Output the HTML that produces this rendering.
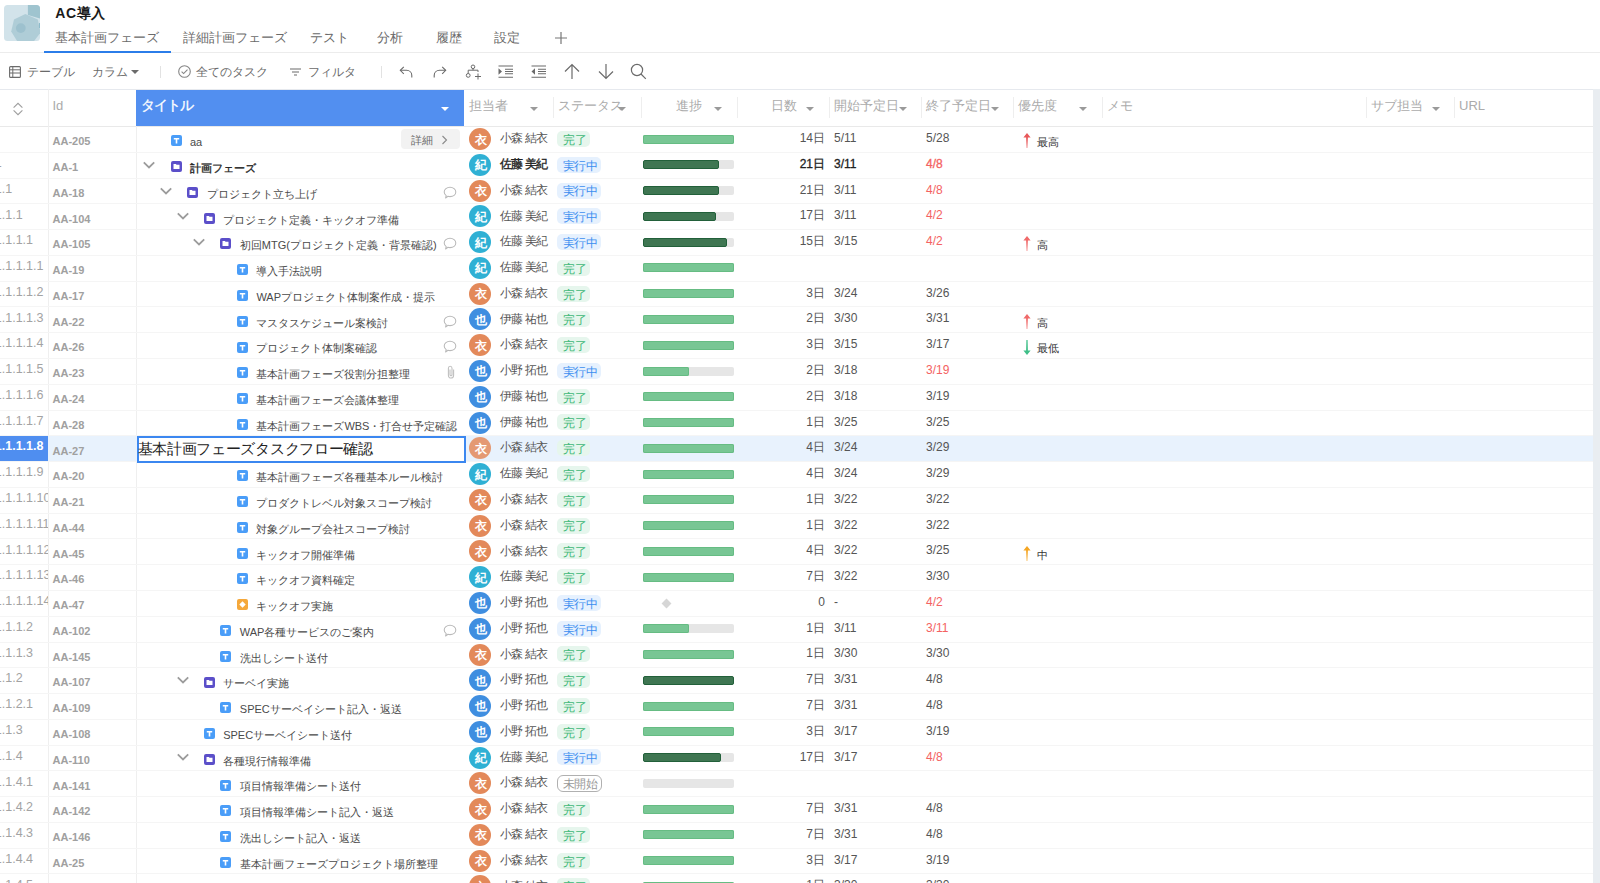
<!DOCTYPE html><html><head><meta charset="utf-8"><style>
*{box-sizing:border-box;margin:0;padding:0}
html,body{width:1600px;height:883px;overflow:hidden;background:#fff;font-family:"Liberation Sans",sans-serif}
.t{position:absolute;white-space:nowrap;line-height:20px}
.a{position:absolute}
svg{display:block}
</style></head><body>
<div class="a" style="left:4px;top:4.5px;width:36.2px;height:36.5px;border-radius:3.5px;overflow:hidden"><svg width="37" height="37" viewBox="0 0.5 37 37"><rect x="0" y="0" width="37" height="38" fill="#d2e3ea"/><path d="M23.9 0H37V14.4L23.9 10.6Z" fill="#9fc4cf"/><path d="M21.3 9.6L33.8 15L36.5 28L29 38H14L7.2 27L10 15Z" fill="#afcdd7"/><circle cx="16.8" cy="23.6" r="4.9" fill="#9dc1ce"/><rect x="35" y="18.5" width="2" height="5" fill="#8fbccb"/></svg></div>
<div class="t" style="left:55.30px;top:2.65px;font-size:14px;color:#1a1a1a;font-weight:bold;letter-spacing:0.5px">AC導入</div>
<div class="t" style="left:55.00px;top:28.00px;font-size:13px;color:#6a6a6a;font-weight:normal;">基本計画フェーズ</div>
<div class="t" style="left:183.00px;top:28.00px;font-size:13px;color:#6a6a6a;font-weight:normal;">詳細計画フェーズ</div>
<div class="t" style="left:310.00px;top:28.00px;font-size:13px;color:#6a6a6a;font-weight:normal;">テスト</div>
<div class="t" style="left:377.00px;top:28.00px;font-size:13px;color:#6a6a6a;font-weight:normal;">分析</div>
<div class="t" style="left:435.50px;top:28.00px;font-size:13px;color:#6a6a6a;font-weight:normal;">履歴</div>
<div class="t" style="left:494.00px;top:28.00px;font-size:13px;color:#6a6a6a;font-weight:normal;">設定</div>
<svg class="a" style="left:554px;top:31px" width="14" height="14" viewBox="0 0 14 14"><path d="M7 1V13M1 7H13" stroke="#777" stroke-width="1.2"/></svg>
<div class="a" style="left:0;top:52px;width:1600px;height:1px;background:#ececec"></div>
<div class="a" style="left:44px;top:50.5px;width:127px;height:2px;background:#2b7de9"></div>
<svg class="a" style="left:9px;top:66px" width="12" height="12" viewBox="0 0 12 12"><rect x="0.6" y="0.6" width="10.8" height="10.8" rx="1" fill="none" stroke="#6b6b6b" stroke-width="1.1"/><path d="M0.6 3.8H11.4M0.6 7H11.4M3.8 0.6V11.4" stroke="#6b6b6b" stroke-width="1"/></svg>
<div class="t" style="left:27.00px;top:62.34px;font-size:12px;color:#6a6a6a;font-weight:normal;">テーブル</div>
<div class="t" style="left:92.00px;top:62.34px;font-size:12px;color:#6a6a6a;font-weight:normal;">カラム</div>
<svg class="a" style="left:131px;top:70px" width="8" height="4" viewBox="0 0 8 4"><path d="M0 0H8L4 4Z" fill="#6b6b6b"/></svg>
<div class="a" style="left:160px;top:65.5px;width:1px;height:12px;background:#e2e2e2"></div>
<svg class="a" style="left:178px;top:65px" width="13" height="13" viewBox="0 0 13 13"><circle cx="6.5" cy="6.5" r="5.8" fill="none" stroke="#858585" stroke-width="1.1"/><path d="M3.6 6.7L5.6 8.6L9.5 4.6" fill="none" stroke="#858585" stroke-width="1.1"/></svg>
<div class="t" style="left:196.00px;top:62.34px;font-size:12px;color:#6a6a6a;font-weight:normal;">全てのタスク</div>
<svg class="a" style="left:290px;top:68px" width="11" height="8" viewBox="0 0 11 8"><path d="M0 1H11M2 4H9M4 7H7" stroke="#6b6b6b" stroke-width="1.1"/></svg>
<div class="t" style="left:308.00px;top:62.34px;font-size:12px;color:#6a6a6a;font-weight:normal;">フィルタ</div>
<div class="a" style="left:380.5px;top:65.5px;width:1px;height:12px;background:#e2e2e2"></div>
<svg class="a" style="left:399px;top:65.5px" width="15" height="14" viewBox="0 0 15 14"><path d="M1.5 4.3H7.5C10.5 4.3 12.8 6.5 12.8 9.5V11.5" fill="none" stroke="#6b6b6b" stroke-width="1.1"/><path d="M4.8 0.8L1.3 4.3L4.8 7.8" fill="none" stroke="#6b6b6b" stroke-width="1.1"/></svg>
<svg class="a" style="left:432px;top:65.5px" width="15" height="14" viewBox="0 0 15 14"><path d="M13.5 4.3H7.5C4.5 4.3 2.2 6.5 2.2 9.5V11.5" fill="none" stroke="#6b6b6b" stroke-width="1.1"/><path d="M10.2 0.8L13.7 4.3L10.2 7.8" fill="none" stroke="#6b6b6b" stroke-width="1.1"/></svg>
<svg class="a" style="left:464.5px;top:64px" width="18" height="17" viewBox="0 0 18 17"><circle cx="8" cy="2.8" r="1.8" fill="none" stroke="#6b6b6b" stroke-width="1"/><path d="M8 4.6V6.2M3.2 9.5V6.2H13V8" fill="none" stroke="#6b6b6b" stroke-width="1"/><circle cx="3.2" cy="11.4" r="1.9" fill="none" stroke="#6b6b6b" stroke-width="1"/><path d="M13 9.5V15.5M10 12.5H16" stroke="#6b6b6b" stroke-width="1"/></svg>
<svg class="a" style="left:497px;top:64px" width="17" height="15" viewBox="0 0 17 15"><path d="M1.5 2H16M8 5.3H16M8 7.5H16M8 9.7H16M1.5 13.3H16" stroke="#6b6b6b" stroke-width="1.1"/><path d="M1.5 4.3L5 7.5L1.5 10.7Z" fill="#6b6b6b"/></svg>
<svg class="a" style="left:530px;top:64px" width="17" height="15" viewBox="0 0 17 15"><path d="M1.5 2H16M8 5.3H16M8 7.5H16M8 9.7H16M1.5 13.3H16" stroke="#6b6b6b" stroke-width="1.1"/><path d="M5 4.3L1.5 7.5L5 10.7Z" fill="#6b6b6b"/></svg>
<svg class="a" style="left:564px;top:63px" width="16" height="17" viewBox="0 0 16 17"><path d="M8 1.5V16M1 8.5L8 1.5L15 8.5" fill="none" stroke="#6b6b6b" stroke-width="1.2"/></svg>
<svg class="a" style="left:597.5px;top:63px" width="16" height="17" viewBox="0 0 16 17"><path d="M8 1V15.5M1 8.5L8 15.5L15 8.5" fill="none" stroke="#6b6b6b" stroke-width="1.2"/></svg>
<svg class="a" style="left:630px;top:63px" width="17" height="17" viewBox="0 0 17 17"><circle cx="7" cy="7" r="5.6" fill="none" stroke="#6b6b6b" stroke-width="1.2"/><path d="M11 11L15.8 15.8" stroke="#6b6b6b" stroke-width="1.2"/></svg>
<div class="a" style="left:0;top:89px;width:1593px;height:1px;background:#e6e9ee"></div>
<div class="a" style="left:0;top:126px;width:1593px;height:1px;background:#e9e9e9"></div>
<div class="a" style="left:1593px;top:89px;width:7px;height:794px;background:#e9edf1"></div>
<div class="a" style="left:136px;top:90px;width:328px;height:36px;background:#528ff0"></div>
<svg class="a" style="left:12px;top:102px" width="12" height="14" viewBox="0 0 12 14"><path d="M1.6 5.6L6 1.3L10.4 5.6M1.6 8.4L6 12.7L10.4 8.4" fill="none" stroke="#9e9e9e" stroke-width="1.1"/></svg>
<div class="t" style="left:52.50px;top:96.00px;font-size:13px;color:#ababab;font-weight:normal;">Id</div>
<div class="t" style="left:140.50px;top:96.32px;font-size:13.5px;color:#ffffff;font-weight:normal;letter-spacing:-1px;-webkit-text-stroke:0.3px #fff">タイトル</div>
<svg class="a" style="left:441px;top:107px" width="8" height="4" viewBox="0 0 8 4"><path d="M0 0H8L4 4Z" fill="#ffffff"/></svg>
<div class="t" style="left:469.00px;top:96.00px;font-size:13px;color:#ababab;font-weight:normal;">担当者</div>
<svg class="a" style="left:530px;top:107px" width="8" height="4" viewBox="0 0 8 4"><path d="M0 0H8L4 4Z" fill="#9a9a9a"/></svg>
<div class="t" style="left:557.50px;top:96.00px;font-size:13px;color:#ababab;font-weight:normal;">ステータス</div>
<svg class="a" style="left:617.5px;top:107px" width="8" height="4" viewBox="0 0 8 4"><path d="M0 0H8L4 4Z" fill="#9a9a9a"/></svg>
<div class="t" style="left:676.00px;top:96.00px;font-size:13px;color:#ababab;font-weight:normal;">進捗</div>
<svg class="a" style="left:714px;top:107px" width="8" height="4" viewBox="0 0 8 4"><path d="M0 0H8L4 4Z" fill="#9a9a9a"/></svg>
<div class="t" style="left:771.00px;top:96.00px;font-size:13px;color:#ababab;font-weight:normal;">日数</div>
<svg class="a" style="left:806px;top:107px" width="8" height="4" viewBox="0 0 8 4"><path d="M0 0H8L4 4Z" fill="#9a9a9a"/></svg>
<div class="t" style="left:834.00px;top:96.00px;font-size:13px;color:#ababab;font-weight:normal;">開始予定日</div>
<svg class="a" style="left:898.5px;top:107px" width="8" height="4" viewBox="0 0 8 4"><path d="M0 0H8L4 4Z" fill="#9a9a9a"/></svg>
<div class="t" style="left:925.50px;top:96.00px;font-size:13px;color:#ababab;font-weight:normal;">終了予定日</div>
<svg class="a" style="left:990.5px;top:107px" width="8" height="4" viewBox="0 0 8 4"><path d="M0 0H8L4 4Z" fill="#9a9a9a"/></svg>
<div class="t" style="left:1018.00px;top:96.00px;font-size:13px;color:#ababab;font-weight:normal;">優先度</div>
<svg class="a" style="left:1079px;top:107px" width="8" height="4" viewBox="0 0 8 4"><path d="M0 0H8L4 4Z" fill="#9a9a9a"/></svg>
<div class="t" style="left:1107.00px;top:96.00px;font-size:13px;color:#ababab;font-weight:normal;">メモ</div>
<div class="t" style="left:1371.00px;top:96.00px;font-size:13px;color:#ababab;font-weight:normal;">サブ担当</div>
<svg class="a" style="left:1431.5px;top:107px" width="8" height="4" viewBox="0 0 8 4"><path d="M0 0H8L4 4Z" fill="#9a9a9a"/></svg>
<div class="t" style="left:1459.00px;top:96.00px;font-size:13px;color:#ababab;font-weight:normal;">URL</div>
<div class="a" style="left:553px;top:97px;width:1px;height:21px;background:#eeeeee"></div>
<div class="a" style="left:641px;top:97px;width:1px;height:21px;background:#eeeeee"></div>
<div class="a" style="left:737px;top:97px;width:1px;height:21px;background:#eeeeee"></div>
<div class="a" style="left:829px;top:97px;width:1px;height:21px;background:#eeeeee"></div>
<div class="a" style="left:921px;top:97px;width:1px;height:21px;background:#eeeeee"></div>
<div class="a" style="left:1013px;top:97px;width:1px;height:21px;background:#eeeeee"></div>
<div class="a" style="left:1102px;top:97px;width:1px;height:21px;background:#eeeeee"></div>
<div class="a" style="left:1366px;top:97px;width:1px;height:21px;background:#eeeeee"></div>
<div class="a" style="left:1454px;top:97px;width:1px;height:21px;background:#eeeeee"></div>
<div class="a" style="left:48px;top:89px;width:1px;height:794px;background:#efefef"></div>
<div class="a" style="left:136px;top:126px;width:1px;height:757px;background:#efefef"></div>
<div class="a" style="left:0;top:151.87px;width:1593px;height:1px;background:#f5f5f5"></div>
<div class="t" style="left:52.50px;top:131.29px;font-size:11px;color:#a0a0a0;font-weight:bold;">AA-205</div>
<div class="a" style="left:170.60px;top:135.40px;width:11px;height:11px"><svg width="11" height="11" viewBox="0 0 11 11"><rect x="0" y="0" width="11" height="11" rx="2" fill="#4a9df8"/><path d="M2.8 2.9H8.2V4.6H6.3V8.6H4.7V4.6H2.8Z" fill="#fff"/></svg></div>
<div class="t" style="left:190.00px;top:132.19px;font-size:11px;color:#4a4a4a;font-weight:normal;">aa</div>
<div class="a" style="left:400.5px;top:129.10px;width:59.5px;height:19.5px;border-radius:4px;background:#f2f2f2"></div>
<div class="t" style="left:411.00px;top:129.59px;font-size:11px;color:#6a6a6a;font-weight:normal;">詳細</div>
<svg class="a" style="left:441px;top:135.10px" width="7" height="10" viewBox="0 0 7 10"><path d="M1.5 1L5.5 5L1.5 9" fill="none" stroke="#8a8a8a" stroke-width="1.1"/></svg>
<div class="a" style="left:469px;top:128.10px;width:22px;height:22px;border-radius:50%;background:#e3895a;"></div>
<div class="t" style="left:474.50px;top:129.54px;font-size:12px;color:#ffffff;font-weight:bold;">衣</div>
<div class="t" style="left:500.00px;top:128.24px;font-size:12px;color:#555555;font-weight:normal;letter-spacing:-0.8px;">小森 結衣</div>
<div class="a" style="left:557px;top:131.00px;width:33px;height:16px;border-radius:5px;background:#e6f6ed"></div>
<div class="t" style="left:563.00px;top:129.94px;font-size:12px;color:#3fb877;font-weight:normal;letter-spacing:-0.4px">完了</div>
<div class="a" style="left:643px;top:134.60px;width:91px;height:9px;border-radius:2px;background:#e6e6e6"></div>
<div class="a" style="left:643px;top:134.60px;width:91.00px;height:9px;border-radius:2px;background:#78c694;box-shadow:inset 0 0 0 1px #66bc83"></div>
<div class="t" style="right:775.00px;top:128.04px;font-size:12px;color:#555555;font-weight:normal;">14日</div>
<div class="t" style="left:834.00px;top:128.04px;font-size:12px;color:#555555;font-weight:normal;">5/11</div>
<div class="t" style="left:926.00px;top:128.04px;font-size:12px;color:#555555;font-weight:normal;">5/28</div>
<svg class="a" style="left:1022.5px;top:133.40px" width="8" height="15" viewBox="0 0 8 15"><path d="M4 0L7.6 4.6H4.9L4.3 15H3.7L3.1 4.6H0.4Z" fill="#e8585a"/></svg>
<div class="t" style="left:1036.50px;top:132.29px;font-size:11px;color:#333333;font-weight:normal;">最高</div>
<div class="a" style="left:0;top:177.64px;width:1593px;height:1px;background:#f5f5f5"></div>
<div class="a" style="left:0;top:152.37px;width:48px;height:25.77px;overflow:hidden"><div class="t" style="left:-5.20px;top:0.67px;font-size:12.5px;color:#a3a3a3;font-weight:normal;">1</div></div>
<div class="t" style="left:52.50px;top:157.06px;font-size:11px;color:#a0a0a0;font-weight:bold;">AA-1</div>
<div class="a" style="left:143.40px;top:160.77px;width:12px;height:8px"><svg width="12" height="8" viewBox="0 0 12 8"><path d="M0.8 1.3L6 6.4L11.2 1.3" fill="none" stroke="#9c9c9c" stroke-width="1.8"/></svg></div>
<div class="a" style="left:170.60px;top:161.17px;width:11px;height:11px"><svg width="11" height="11" viewBox="0 0 11 11"><rect x="0" y="0" width="11" height="11" rx="2" fill="#5b4fc9"/><path d="M2.5 3H4.8L5.6 3.8H8.5V8H2.5Z" fill="#fff"/></svg></div>
<div class="t" style="left:190.00px;top:157.96px;font-size:11px;color:#1f1f1f;font-weight:normal;-webkit-text-stroke:0.35px #222">計画フェーズ</div>
<div class="a" style="left:469px;top:153.87px;width:22px;height:22px;border-radius:50%;background:#2fb0d4;"></div>
<div class="t" style="left:474.50px;top:155.31px;font-size:12px;color:#ffffff;font-weight:bold;">紀</div>
<div class="t" style="left:500.00px;top:154.01px;font-size:12px;color:#222;font-weight:normal;letter-spacing:-0.8px;-webkit-text-stroke:0.35px #222">佐藤 美紀</div>
<div class="a" style="left:557px;top:156.77px;width:44px;height:16px;border-radius:5px;background:#e6f1fe"></div>
<div class="t" style="left:563.00px;top:155.71px;font-size:12px;color:#3d8ef0;font-weight:normal;letter-spacing:-0.7px">実行中</div>
<div class="a" style="left:643px;top:160.37px;width:91px;height:9px;border-radius:2px;background:#e6e6e6"></div>
<div class="a" style="left:643px;top:160.37px;width:75.53px;height:9px;border-radius:2px;background:#3f7652;border:1px solid #22603a"></div>
<div class="t" style="right:775.00px;top:153.81px;font-size:12px;color:#222222;font-weight:normal;-webkit-text-stroke:0.3px currentColor;">21日</div>
<div class="t" style="left:834.00px;top:153.81px;font-size:12px;color:#222222;font-weight:normal;-webkit-text-stroke:0.3px currentColor;">3/11</div>
<div class="t" style="left:926.00px;top:153.81px;font-size:12px;color:#f46262;font-weight:normal;-webkit-text-stroke:0.3px currentColor;">4/8</div>
<div class="a" style="left:0;top:203.41px;width:1593px;height:1px;background:#f5f5f5"></div>
<div class="a" style="left:0;top:178.14px;width:48px;height:25.77px;overflow:hidden"><div class="t" style="left:-5.20px;top:0.67px;font-size:12.5px;color:#a3a3a3;font-weight:normal;">1.1</div></div>
<div class="t" style="left:52.50px;top:182.83px;font-size:11px;color:#a0a0a0;font-weight:bold;">AA-18</div>
<div class="a" style="left:160.00px;top:186.54px;width:12px;height:8px"><svg width="12" height="8" viewBox="0 0 12 8"><path d="M0.8 1.3L6 6.4L11.2 1.3" fill="none" stroke="#9c9c9c" stroke-width="1.8"/></svg></div>
<div class="a" style="left:187.20px;top:186.94px;width:11px;height:11px"><svg width="11" height="11" viewBox="0 0 11 11"><rect x="0" y="0" width="11" height="11" rx="2" fill="#5b4fc9"/><path d="M2.5 3H4.8L5.6 3.8H8.5V8H2.5Z" fill="#fff"/></svg></div>
<div class="t" style="left:206.60px;top:183.73px;font-size:11px;color:#4a4a4a;font-weight:normal;">プロジェクト立ち上げ</div>
<div class="a" style="left:443.2px;top:185.74px;width:14px;height:13px"><svg width="14" height="13" viewBox="0 0 14 13"><path d="M3.2 9.6C2 8.7 1.2 7.4 1.2 6C1.2 3.3 3.8 1.2 7 1.2C10.2 1.2 12.8 3.3 12.8 6C12.8 8.7 10.2 10.6 7 10.6C6.3 10.6 5.6 10.5 5 10.3L2.6 12Z" fill="none" stroke="#b9b9b9" stroke-width="1.05" stroke-linejoin="round"/></svg></div>
<div class="a" style="left:469px;top:179.64px;width:22px;height:22px;border-radius:50%;background:#e3895a;"></div>
<div class="t" style="left:474.50px;top:181.08px;font-size:12px;color:#ffffff;font-weight:bold;">衣</div>
<div class="t" style="left:500.00px;top:179.78px;font-size:12px;color:#555555;font-weight:normal;letter-spacing:-0.8px;">小森 結衣</div>
<div class="a" style="left:557px;top:182.54px;width:44px;height:16px;border-radius:5px;background:#e6f1fe"></div>
<div class="t" style="left:563.00px;top:181.48px;font-size:12px;color:#3d8ef0;font-weight:normal;letter-spacing:-0.7px">実行中</div>
<div class="a" style="left:643px;top:186.14px;width:91px;height:9px;border-radius:2px;background:#e6e6e6"></div>
<div class="a" style="left:643px;top:186.14px;width:75.53px;height:9px;border-radius:2px;background:#3f7652;border:1px solid #22603a"></div>
<div class="t" style="right:775.00px;top:179.58px;font-size:12px;color:#555555;font-weight:normal;">21日</div>
<div class="t" style="left:834.00px;top:179.58px;font-size:12px;color:#555555;font-weight:normal;">3/11</div>
<div class="t" style="left:926.00px;top:179.58px;font-size:12px;color:#f46262;font-weight:normal;">4/8</div>
<div class="a" style="left:0;top:229.18px;width:1593px;height:1px;background:#f5f5f5"></div>
<div class="a" style="left:0;top:203.91px;width:48px;height:25.77px;overflow:hidden"><div class="t" style="left:-5.20px;top:0.67px;font-size:12.5px;color:#a3a3a3;font-weight:normal;">1.1.1</div></div>
<div class="t" style="left:52.50px;top:208.60px;font-size:11px;color:#a0a0a0;font-weight:bold;">AA-104</div>
<div class="a" style="left:176.60px;top:212.31px;width:12px;height:8px"><svg width="12" height="8" viewBox="0 0 12 8"><path d="M0.8 1.3L6 6.4L11.2 1.3" fill="none" stroke="#9c9c9c" stroke-width="1.8"/></svg></div>
<div class="a" style="left:203.80px;top:212.71px;width:11px;height:11px"><svg width="11" height="11" viewBox="0 0 11 11"><rect x="0" y="0" width="11" height="11" rx="2" fill="#5b4fc9"/><path d="M2.5 3H4.8L5.6 3.8H8.5V8H2.5Z" fill="#fff"/></svg></div>
<div class="t" style="left:223.20px;top:209.50px;font-size:11px;color:#4a4a4a;font-weight:normal;">プロジェクト定義・キックオフ準備</div>
<div class="a" style="left:469px;top:205.41px;width:22px;height:22px;border-radius:50%;background:#2fb0d4;"></div>
<div class="t" style="left:474.50px;top:206.85px;font-size:12px;color:#ffffff;font-weight:bold;">紀</div>
<div class="t" style="left:500.00px;top:205.55px;font-size:12px;color:#555555;font-weight:normal;letter-spacing:-0.8px;">佐藤 美紀</div>
<div class="a" style="left:557px;top:208.31px;width:44px;height:16px;border-radius:5px;background:#e6f1fe"></div>
<div class="t" style="left:563.00px;top:207.25px;font-size:12px;color:#3d8ef0;font-weight:normal;letter-spacing:-0.7px">実行中</div>
<div class="a" style="left:643px;top:211.91px;width:91px;height:9px;border-radius:2px;background:#e6e6e6"></div>
<div class="a" style="left:643px;top:211.91px;width:72.80px;height:9px;border-radius:2px;background:#3f7652;border:1px solid #22603a"></div>
<div class="t" style="right:775.00px;top:205.35px;font-size:12px;color:#555555;font-weight:normal;">17日</div>
<div class="t" style="left:834.00px;top:205.35px;font-size:12px;color:#555555;font-weight:normal;">3/11</div>
<div class="t" style="left:926.00px;top:205.35px;font-size:12px;color:#f46262;font-weight:normal;">4/2</div>
<div class="a" style="left:0;top:254.95px;width:1593px;height:1px;background:#f5f5f5"></div>
<div class="a" style="left:0;top:229.68px;width:48px;height:25.77px;overflow:hidden"><div class="t" style="left:-5.20px;top:0.67px;font-size:12.5px;color:#a3a3a3;font-weight:normal;">1.1.1.1</div></div>
<div class="t" style="left:52.50px;top:234.37px;font-size:11px;color:#a0a0a0;font-weight:bold;">AA-105</div>
<div class="a" style="left:193.20px;top:238.08px;width:12px;height:8px"><svg width="12" height="8" viewBox="0 0 12 8"><path d="M0.8 1.3L6 6.4L11.2 1.3" fill="none" stroke="#9c9c9c" stroke-width="1.8"/></svg></div>
<div class="a" style="left:220.40px;top:238.48px;width:11px;height:11px"><svg width="11" height="11" viewBox="0 0 11 11"><rect x="0" y="0" width="11" height="11" rx="2" fill="#5b4fc9"/><path d="M2.5 3H4.8L5.6 3.8H8.5V8H2.5Z" fill="#fff"/></svg></div>
<div class="t" style="left:239.80px;top:235.27px;font-size:11px;color:#4a4a4a;font-weight:normal;">初回MTG(プロジェクト定義・背景確認)</div>
<div class="a" style="left:443.2px;top:237.28px;width:14px;height:13px"><svg width="14" height="13" viewBox="0 0 14 13"><path d="M3.2 9.6C2 8.7 1.2 7.4 1.2 6C1.2 3.3 3.8 1.2 7 1.2C10.2 1.2 12.8 3.3 12.8 6C12.8 8.7 10.2 10.6 7 10.6C6.3 10.6 5.6 10.5 5 10.3L2.6 12Z" fill="none" stroke="#b9b9b9" stroke-width="1.05" stroke-linejoin="round"/></svg></div>
<div class="a" style="left:469px;top:231.18px;width:22px;height:22px;border-radius:50%;background:#2fb0d4;"></div>
<div class="t" style="left:474.50px;top:232.62px;font-size:12px;color:#ffffff;font-weight:bold;">紀</div>
<div class="t" style="left:500.00px;top:231.32px;font-size:12px;color:#555555;font-weight:normal;letter-spacing:-0.8px;">佐藤 美紀</div>
<div class="a" style="left:557px;top:234.08px;width:44px;height:16px;border-radius:5px;background:#e6f1fe"></div>
<div class="t" style="left:563.00px;top:233.02px;font-size:12px;color:#3d8ef0;font-weight:normal;letter-spacing:-0.7px">実行中</div>
<div class="a" style="left:643px;top:237.68px;width:91px;height:9px;border-radius:2px;background:#e6e6e6"></div>
<div class="a" style="left:643px;top:237.68px;width:83.72px;height:9px;border-radius:2px;background:#3f7652;border:1px solid #22603a"></div>
<div class="t" style="right:775.00px;top:231.12px;font-size:12px;color:#555555;font-weight:normal;">15日</div>
<div class="t" style="left:834.00px;top:231.12px;font-size:12px;color:#555555;font-weight:normal;">3/15</div>
<div class="t" style="left:926.00px;top:231.12px;font-size:12px;color:#f46262;font-weight:normal;">4/2</div>
<svg class="a" style="left:1022.5px;top:236.48px" width="8" height="15" viewBox="0 0 8 15"><path d="M4 0L7.6 4.6H4.9L4.3 15H3.7L3.1 4.6H0.4Z" fill="#f06a6a"/></svg>
<div class="t" style="left:1036.50px;top:235.37px;font-size:11px;color:#333333;font-weight:normal;">高</div>
<div class="a" style="left:0;top:280.72px;width:1593px;height:1px;background:#f5f5f5"></div>
<div class="a" style="left:0;top:255.45px;width:48px;height:25.77px;overflow:hidden"><div class="t" style="left:-5.20px;top:0.67px;font-size:12.5px;color:#a3a3a3;font-weight:normal;">1.1.1.1.1</div></div>
<div class="t" style="left:52.50px;top:260.14px;font-size:11px;color:#a0a0a0;font-weight:bold;">AA-19</div>
<div class="a" style="left:237.00px;top:264.25px;width:11px;height:11px"><svg width="11" height="11" viewBox="0 0 11 11"><rect x="0" y="0" width="11" height="11" rx="2" fill="#4a9df8"/><path d="M2.8 2.9H8.2V4.6H6.3V8.6H4.7V4.6H2.8Z" fill="#fff"/></svg></div>
<div class="t" style="left:256.40px;top:261.04px;font-size:11px;color:#4a4a4a;font-weight:normal;">導入手法説明</div>
<div class="a" style="left:469px;top:256.95px;width:22px;height:22px;border-radius:50%;background:#2fb0d4;"></div>
<div class="t" style="left:474.50px;top:258.39px;font-size:12px;color:#ffffff;font-weight:bold;">紀</div>
<div class="t" style="left:500.00px;top:257.09px;font-size:12px;color:#555555;font-weight:normal;letter-spacing:-0.8px;">佐藤 美紀</div>
<div class="a" style="left:557px;top:259.85px;width:33px;height:16px;border-radius:5px;background:#e6f6ed"></div>
<div class="t" style="left:563.00px;top:258.79px;font-size:12px;color:#3fb877;font-weight:normal;letter-spacing:-0.4px">完了</div>
<div class="a" style="left:643px;top:263.45px;width:91px;height:9px;border-radius:2px;background:#e6e6e6"></div>
<div class="a" style="left:643px;top:263.45px;width:91.00px;height:9px;border-radius:2px;background:#78c694;box-shadow:inset 0 0 0 1px #66bc83"></div>
<div class="a" style="left:0;top:306.49px;width:1593px;height:1px;background:#f5f5f5"></div>
<div class="a" style="left:0;top:281.22px;width:48px;height:25.77px;overflow:hidden"><div class="t" style="left:-5.20px;top:0.67px;font-size:12.5px;color:#a3a3a3;font-weight:normal;">1.1.1.1.2</div></div>
<div class="t" style="left:52.50px;top:285.91px;font-size:11px;color:#a0a0a0;font-weight:bold;">AA-17</div>
<div class="a" style="left:237.00px;top:290.02px;width:11px;height:11px"><svg width="11" height="11" viewBox="0 0 11 11"><rect x="0" y="0" width="11" height="11" rx="2" fill="#4a9df8"/><path d="M2.8 2.9H8.2V4.6H6.3V8.6H4.7V4.6H2.8Z" fill="#fff"/></svg></div>
<div class="t" style="left:256.40px;top:286.81px;font-size:11px;color:#4a4a4a;font-weight:normal;">WAPプロジェクト体制案作成・提示</div>
<div class="a" style="left:469px;top:282.72px;width:22px;height:22px;border-radius:50%;background:#e3895a;"></div>
<div class="t" style="left:474.50px;top:284.16px;font-size:12px;color:#ffffff;font-weight:bold;">衣</div>
<div class="t" style="left:500.00px;top:282.86px;font-size:12px;color:#555555;font-weight:normal;letter-spacing:-0.8px;">小森 結衣</div>
<div class="a" style="left:557px;top:285.62px;width:33px;height:16px;border-radius:5px;background:#e6f6ed"></div>
<div class="t" style="left:563.00px;top:284.56px;font-size:12px;color:#3fb877;font-weight:normal;letter-spacing:-0.4px">完了</div>
<div class="a" style="left:643px;top:289.22px;width:91px;height:9px;border-radius:2px;background:#e6e6e6"></div>
<div class="a" style="left:643px;top:289.22px;width:91.00px;height:9px;border-radius:2px;background:#78c694;box-shadow:inset 0 0 0 1px #66bc83"></div>
<div class="t" style="right:775.00px;top:282.66px;font-size:12px;color:#555555;font-weight:normal;">3日</div>
<div class="t" style="left:834.00px;top:282.66px;font-size:12px;color:#555555;font-weight:normal;">3/24</div>
<div class="t" style="left:926.00px;top:282.66px;font-size:12px;color:#555555;font-weight:normal;">3/26</div>
<div class="a" style="left:0;top:332.26px;width:1593px;height:1px;background:#f5f5f5"></div>
<div class="a" style="left:0;top:306.99px;width:48px;height:25.77px;overflow:hidden"><div class="t" style="left:-5.20px;top:0.67px;font-size:12.5px;color:#a3a3a3;font-weight:normal;">1.1.1.1.3</div></div>
<div class="t" style="left:52.50px;top:311.68px;font-size:11px;color:#a0a0a0;font-weight:bold;">AA-22</div>
<div class="a" style="left:237.00px;top:315.79px;width:11px;height:11px"><svg width="11" height="11" viewBox="0 0 11 11"><rect x="0" y="0" width="11" height="11" rx="2" fill="#4a9df8"/><path d="M2.8 2.9H8.2V4.6H6.3V8.6H4.7V4.6H2.8Z" fill="#fff"/></svg></div>
<div class="t" style="left:256.40px;top:312.58px;font-size:11px;color:#4a4a4a;font-weight:normal;">マスタスケジュール案検討</div>
<div class="a" style="left:443.2px;top:314.59px;width:14px;height:13px"><svg width="14" height="13" viewBox="0 0 14 13"><path d="M3.2 9.6C2 8.7 1.2 7.4 1.2 6C1.2 3.3 3.8 1.2 7 1.2C10.2 1.2 12.8 3.3 12.8 6C12.8 8.7 10.2 10.6 7 10.6C6.3 10.6 5.6 10.5 5 10.3L2.6 12Z" fill="none" stroke="#b9b9b9" stroke-width="1.05" stroke-linejoin="round"/></svg></div>
<div class="a" style="left:469px;top:308.49px;width:22px;height:22px;border-radius:50%;background:#3f8ee0;"></div>
<div class="t" style="left:474.50px;top:309.93px;font-size:12px;color:#ffffff;font-weight:bold;">也</div>
<div class="t" style="left:500.00px;top:308.63px;font-size:12px;color:#555555;font-weight:normal;letter-spacing:-0.8px;">伊藤 祐也</div>
<div class="a" style="left:557px;top:311.39px;width:33px;height:16px;border-radius:5px;background:#e6f6ed"></div>
<div class="t" style="left:563.00px;top:310.33px;font-size:12px;color:#3fb877;font-weight:normal;letter-spacing:-0.4px">完了</div>
<div class="a" style="left:643px;top:314.99px;width:91px;height:9px;border-radius:2px;background:#e6e6e6"></div>
<div class="a" style="left:643px;top:314.99px;width:91.00px;height:9px;border-radius:2px;background:#78c694;box-shadow:inset 0 0 0 1px #66bc83"></div>
<div class="t" style="right:775.00px;top:308.43px;font-size:12px;color:#555555;font-weight:normal;">2日</div>
<div class="t" style="left:834.00px;top:308.43px;font-size:12px;color:#555555;font-weight:normal;">3/30</div>
<div class="t" style="left:926.00px;top:308.43px;font-size:12px;color:#555555;font-weight:normal;">3/31</div>
<svg class="a" style="left:1022.5px;top:313.79px" width="8" height="15" viewBox="0 0 8 15"><path d="M4 0L7.6 4.6H4.9L4.3 15H3.7L3.1 4.6H0.4Z" fill="#f06a6a"/></svg>
<div class="t" style="left:1036.50px;top:312.68px;font-size:11px;color:#333333;font-weight:normal;">高</div>
<div class="a" style="left:0;top:358.03px;width:1593px;height:1px;background:#f5f5f5"></div>
<div class="a" style="left:0;top:332.76px;width:48px;height:25.77px;overflow:hidden"><div class="t" style="left:-5.20px;top:0.67px;font-size:12.5px;color:#a3a3a3;font-weight:normal;">1.1.1.1.4</div></div>
<div class="t" style="left:52.50px;top:337.45px;font-size:11px;color:#a0a0a0;font-weight:bold;">AA-26</div>
<div class="a" style="left:237.00px;top:341.56px;width:11px;height:11px"><svg width="11" height="11" viewBox="0 0 11 11"><rect x="0" y="0" width="11" height="11" rx="2" fill="#4a9df8"/><path d="M2.8 2.9H8.2V4.6H6.3V8.6H4.7V4.6H2.8Z" fill="#fff"/></svg></div>
<div class="t" style="left:256.40px;top:338.35px;font-size:11px;color:#4a4a4a;font-weight:normal;">プロジェクト体制案確認</div>
<div class="a" style="left:443.2px;top:340.36px;width:14px;height:13px"><svg width="14" height="13" viewBox="0 0 14 13"><path d="M3.2 9.6C2 8.7 1.2 7.4 1.2 6C1.2 3.3 3.8 1.2 7 1.2C10.2 1.2 12.8 3.3 12.8 6C12.8 8.7 10.2 10.6 7 10.6C6.3 10.6 5.6 10.5 5 10.3L2.6 12Z" fill="none" stroke="#b9b9b9" stroke-width="1.05" stroke-linejoin="round"/></svg></div>
<div class="a" style="left:469px;top:334.26px;width:22px;height:22px;border-radius:50%;background:#e3895a;"></div>
<div class="t" style="left:474.50px;top:335.70px;font-size:12px;color:#ffffff;font-weight:bold;">衣</div>
<div class="t" style="left:500.00px;top:334.40px;font-size:12px;color:#555555;font-weight:normal;letter-spacing:-0.8px;">小森 結衣</div>
<div class="a" style="left:557px;top:337.16px;width:33px;height:16px;border-radius:5px;background:#e6f6ed"></div>
<div class="t" style="left:563.00px;top:336.10px;font-size:12px;color:#3fb877;font-weight:normal;letter-spacing:-0.4px">完了</div>
<div class="a" style="left:643px;top:340.76px;width:91px;height:9px;border-radius:2px;background:#e6e6e6"></div>
<div class="a" style="left:643px;top:340.76px;width:91.00px;height:9px;border-radius:2px;background:#78c694;box-shadow:inset 0 0 0 1px #66bc83"></div>
<div class="t" style="right:775.00px;top:334.20px;font-size:12px;color:#555555;font-weight:normal;">3日</div>
<div class="t" style="left:834.00px;top:334.20px;font-size:12px;color:#555555;font-weight:normal;">3/15</div>
<div class="t" style="left:926.00px;top:334.20px;font-size:12px;color:#555555;font-weight:normal;">3/17</div>
<svg class="a" style="left:1022.5px;top:339.96px" width="8" height="15" viewBox="0 0 8 15"><path d="M4 15L7.6 10.4H4.9L4.6 0H3.4L3.1 10.4H0.4Z" fill="#3fbf88"/></svg>
<div class="t" style="left:1036.50px;top:338.45px;font-size:11px;color:#333333;font-weight:normal;">最低</div>
<div class="a" style="left:0;top:383.80px;width:1593px;height:1px;background:#f5f5f5"></div>
<div class="a" style="left:0;top:358.53px;width:48px;height:25.77px;overflow:hidden"><div class="t" style="left:-5.20px;top:0.67px;font-size:12.5px;color:#a3a3a3;font-weight:normal;">1.1.1.1.5</div></div>
<div class="t" style="left:52.50px;top:363.22px;font-size:11px;color:#a0a0a0;font-weight:bold;">AA-23</div>
<div class="a" style="left:237.00px;top:367.33px;width:11px;height:11px"><svg width="11" height="11" viewBox="0 0 11 11"><rect x="0" y="0" width="11" height="11" rx="2" fill="#4a9df8"/><path d="M2.8 2.9H8.2V4.6H6.3V8.6H4.7V4.6H2.8Z" fill="#fff"/></svg></div>
<div class="t" style="left:256.40px;top:364.12px;font-size:11px;color:#4a4a4a;font-weight:normal;">基本計画フェーズ役割分担整理</div>
<div class="a" style="left:446.5px;top:364.53px;width:8px;height:14px"><svg width="8" height="14" viewBox="0 0 8 14"><path d="M6.6 4.5V10.2C6.6 12 5.5 13 4 13C2.5 13 1.4 12 1.4 10.2V3.2C1.4 2 2.2 1.2 3.2 1.2C4.3 1.2 5 2 5 3.2V9.8C5 10.4 4.6 10.8 4 10.8C3.4 10.8 3 10.4 3 9.8V4.5" fill="none" stroke="#c0c0c0" stroke-width="1.1"/></svg></div>
<div class="a" style="left:469px;top:360.03px;width:22px;height:22px;border-radius:50%;background:#3f8ee0;"></div>
<div class="t" style="left:474.50px;top:361.47px;font-size:12px;color:#ffffff;font-weight:bold;">也</div>
<div class="t" style="left:500.00px;top:360.17px;font-size:12px;color:#555555;font-weight:normal;letter-spacing:-0.8px;">小野 拓也</div>
<div class="a" style="left:557px;top:362.93px;width:44px;height:16px;border-radius:5px;background:#e6f1fe"></div>
<div class="t" style="left:563.00px;top:361.87px;font-size:12px;color:#3d8ef0;font-weight:normal;letter-spacing:-0.7px">実行中</div>
<div class="a" style="left:643px;top:366.53px;width:91px;height:9px;border-radius:2px;background:#e6e6e6"></div>
<div class="a" style="left:643px;top:366.53px;width:45.50px;height:9px;border-radius:2px;background:#78c694;box-shadow:inset 0 0 0 1px #66bc83"></div>
<div class="t" style="right:775.00px;top:359.97px;font-size:12px;color:#555555;font-weight:normal;">2日</div>
<div class="t" style="left:834.00px;top:359.97px;font-size:12px;color:#555555;font-weight:normal;">3/18</div>
<div class="t" style="left:926.00px;top:359.97px;font-size:12px;color:#f46262;font-weight:normal;">3/19</div>
<div class="a" style="left:0;top:409.57px;width:1593px;height:1px;background:#f5f5f5"></div>
<div class="a" style="left:0;top:384.30px;width:48px;height:25.77px;overflow:hidden"><div class="t" style="left:-5.20px;top:0.67px;font-size:12.5px;color:#a3a3a3;font-weight:normal;">1.1.1.1.6</div></div>
<div class="t" style="left:52.50px;top:388.99px;font-size:11px;color:#a0a0a0;font-weight:bold;">AA-24</div>
<div class="a" style="left:237.00px;top:393.10px;width:11px;height:11px"><svg width="11" height="11" viewBox="0 0 11 11"><rect x="0" y="0" width="11" height="11" rx="2" fill="#4a9df8"/><path d="M2.8 2.9H8.2V4.6H6.3V8.6H4.7V4.6H2.8Z" fill="#fff"/></svg></div>
<div class="t" style="left:256.40px;top:389.89px;font-size:11px;color:#4a4a4a;font-weight:normal;">基本計画フェーズ会議体整理</div>
<div class="a" style="left:469px;top:385.80px;width:22px;height:22px;border-radius:50%;background:#3f8ee0;"></div>
<div class="t" style="left:474.50px;top:387.24px;font-size:12px;color:#ffffff;font-weight:bold;">也</div>
<div class="t" style="left:500.00px;top:385.94px;font-size:12px;color:#555555;font-weight:normal;letter-spacing:-0.8px;">伊藤 祐也</div>
<div class="a" style="left:557px;top:388.70px;width:33px;height:16px;border-radius:5px;background:#e6f6ed"></div>
<div class="t" style="left:563.00px;top:387.64px;font-size:12px;color:#3fb877;font-weight:normal;letter-spacing:-0.4px">完了</div>
<div class="a" style="left:643px;top:392.30px;width:91px;height:9px;border-radius:2px;background:#e6e6e6"></div>
<div class="a" style="left:643px;top:392.30px;width:91.00px;height:9px;border-radius:2px;background:#78c694;box-shadow:inset 0 0 0 1px #66bc83"></div>
<div class="t" style="right:775.00px;top:385.74px;font-size:12px;color:#555555;font-weight:normal;">2日</div>
<div class="t" style="left:834.00px;top:385.74px;font-size:12px;color:#555555;font-weight:normal;">3/18</div>
<div class="t" style="left:926.00px;top:385.74px;font-size:12px;color:#555555;font-weight:normal;">3/19</div>
<div class="a" style="left:0;top:435.34px;width:1593px;height:1px;background:#f5f5f5"></div>
<div class="a" style="left:0;top:410.07px;width:48px;height:25.77px;overflow:hidden"><div class="t" style="left:-5.20px;top:0.67px;font-size:12.5px;color:#a3a3a3;font-weight:normal;">1.1.1.1.7</div></div>
<div class="t" style="left:52.50px;top:414.76px;font-size:11px;color:#a0a0a0;font-weight:bold;">AA-28</div>
<div class="a" style="left:237.00px;top:418.87px;width:11px;height:11px"><svg width="11" height="11" viewBox="0 0 11 11"><rect x="0" y="0" width="11" height="11" rx="2" fill="#4a9df8"/><path d="M2.8 2.9H8.2V4.6H6.3V8.6H4.7V4.6H2.8Z" fill="#fff"/></svg></div>
<div class="t" style="left:256.40px;top:415.66px;font-size:11px;color:#4a4a4a;font-weight:normal;">基本計画フェーズWBS・打合せ予定確認</div>
<div class="a" style="left:469px;top:411.57px;width:22px;height:22px;border-radius:50%;background:#3f8ee0;"></div>
<div class="t" style="left:474.50px;top:413.01px;font-size:12px;color:#ffffff;font-weight:bold;">也</div>
<div class="t" style="left:500.00px;top:411.71px;font-size:12px;color:#555555;font-weight:normal;letter-spacing:-0.8px;">伊藤 祐也</div>
<div class="a" style="left:557px;top:414.47px;width:33px;height:16px;border-radius:5px;background:#e6f6ed"></div>
<div class="t" style="left:563.00px;top:413.41px;font-size:12px;color:#3fb877;font-weight:normal;letter-spacing:-0.4px">完了</div>
<div class="a" style="left:643px;top:418.07px;width:91px;height:9px;border-radius:2px;background:#e6e6e6"></div>
<div class="a" style="left:643px;top:418.07px;width:91.00px;height:9px;border-radius:2px;background:#78c694;box-shadow:inset 0 0 0 1px #66bc83"></div>
<div class="t" style="right:775.00px;top:411.51px;font-size:12px;color:#555555;font-weight:normal;">1日</div>
<div class="t" style="left:834.00px;top:411.51px;font-size:12px;color:#555555;font-weight:normal;">3/25</div>
<div class="t" style="left:926.00px;top:411.51px;font-size:12px;color:#555555;font-weight:normal;">3/25</div>
<div class="a" style="left:0;top:436.34px;width:1593px;height:25.27px;background:#e8f2fd"></div>
<div class="a" style="left:0;top:436.34px;width:48px;height:25.27px;background:#4f8ef0"></div>
<div class="a" style="left:0;top:461.11px;width:1593px;height:1px;background:#f5f5f5"></div>
<div class="a" style="left:0;top:435.84px;width:48px;height:25.77px;overflow:hidden"><div class="t" style="left:-5.20px;top:0.67px;font-size:12.5px;color:#ffffff;font-weight:bold;">1.1.1.1.8</div></div>
<div class="t" style="left:52.50px;top:440.53px;font-size:11px;color:#a0a0a0;font-weight:bold;">AA-27</div>
<div class="a" style="left:136.6px;top:435.84px;width:329.4px;height:27.27px;border:2px solid #3b87f0;background:#fff"></div>
<div class="t" style="left:137.60px;top:439.12px;font-size:14.5px;color:#222;font-weight:normal;letter-spacing:-0.3px">基本計画フェーズタスクフロー確認</div>
<div class="a" style="left:469px;top:437.34px;width:22px;height:22px;border-radius:50%;background:#e3895a;opacity:.85;"></div>
<div class="t" style="left:474.50px;top:438.78px;font-size:12px;color:#ffffff;font-weight:bold;">衣</div>
<div class="t" style="left:500.00px;top:437.48px;font-size:12px;color:#555555;font-weight:normal;letter-spacing:-0.8px;">小森 結衣</div>
<div class="a" style="left:557px;top:440.24px;width:33px;height:16px;border-radius:5px;background:#e6f6ed"></div>
<div class="t" style="left:563.00px;top:439.18px;font-size:12px;color:#3fb877;font-weight:normal;letter-spacing:-0.4px">完了</div>
<div class="a" style="left:643px;top:443.84px;width:91px;height:9px;border-radius:2px;background:#e6e6e6"></div>
<div class="a" style="left:643px;top:443.84px;width:91.00px;height:9px;border-radius:2px;background:#78c694;box-shadow:inset 0 0 0 1px #66bc83"></div>
<div class="t" style="right:775.00px;top:437.28px;font-size:12px;color:#555555;font-weight:normal;">4日</div>
<div class="t" style="left:834.00px;top:437.28px;font-size:12px;color:#555555;font-weight:normal;">3/24</div>
<div class="t" style="left:926.00px;top:437.28px;font-size:12px;color:#555555;font-weight:normal;">3/29</div>
<div class="a" style="left:0;top:486.88px;width:1593px;height:1px;background:#f5f5f5"></div>
<div class="a" style="left:0;top:461.61px;width:48px;height:25.77px;overflow:hidden"><div class="t" style="left:-5.20px;top:0.67px;font-size:12.5px;color:#a3a3a3;font-weight:normal;">1.1.1.1.9</div></div>
<div class="t" style="left:52.50px;top:466.30px;font-size:11px;color:#a0a0a0;font-weight:bold;">AA-20</div>
<div class="a" style="left:237.00px;top:470.41px;width:11px;height:11px"><svg width="11" height="11" viewBox="0 0 11 11"><rect x="0" y="0" width="11" height="11" rx="2" fill="#4a9df8"/><path d="M2.8 2.9H8.2V4.6H6.3V8.6H4.7V4.6H2.8Z" fill="#fff"/></svg></div>
<div class="t" style="left:256.40px;top:467.20px;font-size:11px;color:#4a4a4a;font-weight:normal;">基本計画フェーズ各種基本ルール検討</div>
<div class="a" style="left:469px;top:463.11px;width:22px;height:22px;border-radius:50%;background:#2fb0d4;"></div>
<div class="t" style="left:474.50px;top:464.55px;font-size:12px;color:#ffffff;font-weight:bold;">紀</div>
<div class="t" style="left:500.00px;top:463.25px;font-size:12px;color:#555555;font-weight:normal;letter-spacing:-0.8px;">佐藤 美紀</div>
<div class="a" style="left:557px;top:466.01px;width:33px;height:16px;border-radius:5px;background:#e6f6ed"></div>
<div class="t" style="left:563.00px;top:464.95px;font-size:12px;color:#3fb877;font-weight:normal;letter-spacing:-0.4px">完了</div>
<div class="a" style="left:643px;top:469.61px;width:91px;height:9px;border-radius:2px;background:#e6e6e6"></div>
<div class="a" style="left:643px;top:469.61px;width:91.00px;height:9px;border-radius:2px;background:#78c694;box-shadow:inset 0 0 0 1px #66bc83"></div>
<div class="t" style="right:775.00px;top:463.05px;font-size:12px;color:#555555;font-weight:normal;">4日</div>
<div class="t" style="left:834.00px;top:463.05px;font-size:12px;color:#555555;font-weight:normal;">3/24</div>
<div class="t" style="left:926.00px;top:463.05px;font-size:12px;color:#555555;font-weight:normal;">3/29</div>
<div class="a" style="left:0;top:512.65px;width:1593px;height:1px;background:#f5f5f5"></div>
<div class="a" style="left:0;top:487.38px;width:48px;height:25.77px;overflow:hidden"><div class="t" style="left:-5.20px;top:0.67px;font-size:12.5px;color:#a3a3a3;font-weight:normal;">1.1.1.1.10</div></div>
<div class="t" style="left:52.50px;top:492.07px;font-size:11px;color:#a0a0a0;font-weight:bold;">AA-21</div>
<div class="a" style="left:237.00px;top:496.18px;width:11px;height:11px"><svg width="11" height="11" viewBox="0 0 11 11"><rect x="0" y="0" width="11" height="11" rx="2" fill="#4a9df8"/><path d="M2.8 2.9H8.2V4.6H6.3V8.6H4.7V4.6H2.8Z" fill="#fff"/></svg></div>
<div class="t" style="left:256.40px;top:492.97px;font-size:11px;color:#4a4a4a;font-weight:normal;">プロダクトレベル対象スコープ検討</div>
<div class="a" style="left:469px;top:488.88px;width:22px;height:22px;border-radius:50%;background:#e3895a;"></div>
<div class="t" style="left:474.50px;top:490.32px;font-size:12px;color:#ffffff;font-weight:bold;">衣</div>
<div class="t" style="left:500.00px;top:489.02px;font-size:12px;color:#555555;font-weight:normal;letter-spacing:-0.8px;">小森 結衣</div>
<div class="a" style="left:557px;top:491.78px;width:33px;height:16px;border-radius:5px;background:#e6f6ed"></div>
<div class="t" style="left:563.00px;top:490.72px;font-size:12px;color:#3fb877;font-weight:normal;letter-spacing:-0.4px">完了</div>
<div class="a" style="left:643px;top:495.38px;width:91px;height:9px;border-radius:2px;background:#e6e6e6"></div>
<div class="a" style="left:643px;top:495.38px;width:91.00px;height:9px;border-radius:2px;background:#78c694;box-shadow:inset 0 0 0 1px #66bc83"></div>
<div class="t" style="right:775.00px;top:488.82px;font-size:12px;color:#555555;font-weight:normal;">1日</div>
<div class="t" style="left:834.00px;top:488.82px;font-size:12px;color:#555555;font-weight:normal;">3/22</div>
<div class="t" style="left:926.00px;top:488.82px;font-size:12px;color:#555555;font-weight:normal;">3/22</div>
<div class="a" style="left:0;top:538.42px;width:1593px;height:1px;background:#f5f5f5"></div>
<div class="a" style="left:0;top:513.15px;width:48px;height:25.77px;overflow:hidden"><div class="t" style="left:-5.20px;top:0.67px;font-size:12.5px;color:#a3a3a3;font-weight:normal;">1.1.1.1.11</div></div>
<div class="t" style="left:52.50px;top:517.84px;font-size:11px;color:#a0a0a0;font-weight:bold;">AA-44</div>
<div class="a" style="left:237.00px;top:521.95px;width:11px;height:11px"><svg width="11" height="11" viewBox="0 0 11 11"><rect x="0" y="0" width="11" height="11" rx="2" fill="#4a9df8"/><path d="M2.8 2.9H8.2V4.6H6.3V8.6H4.7V4.6H2.8Z" fill="#fff"/></svg></div>
<div class="t" style="left:256.40px;top:518.74px;font-size:11px;color:#4a4a4a;font-weight:normal;">対象グループ会社スコープ検討</div>
<div class="a" style="left:469px;top:514.65px;width:22px;height:22px;border-radius:50%;background:#e3895a;"></div>
<div class="t" style="left:474.50px;top:516.09px;font-size:12px;color:#ffffff;font-weight:bold;">衣</div>
<div class="t" style="left:500.00px;top:514.79px;font-size:12px;color:#555555;font-weight:normal;letter-spacing:-0.8px;">小森 結衣</div>
<div class="a" style="left:557px;top:517.55px;width:33px;height:16px;border-radius:5px;background:#e6f6ed"></div>
<div class="t" style="left:563.00px;top:516.49px;font-size:12px;color:#3fb877;font-weight:normal;letter-spacing:-0.4px">完了</div>
<div class="a" style="left:643px;top:521.15px;width:91px;height:9px;border-radius:2px;background:#e6e6e6"></div>
<div class="a" style="left:643px;top:521.15px;width:91.00px;height:9px;border-radius:2px;background:#78c694;box-shadow:inset 0 0 0 1px #66bc83"></div>
<div class="t" style="right:775.00px;top:514.59px;font-size:12px;color:#555555;font-weight:normal;">1日</div>
<div class="t" style="left:834.00px;top:514.59px;font-size:12px;color:#555555;font-weight:normal;">3/22</div>
<div class="t" style="left:926.00px;top:514.59px;font-size:12px;color:#555555;font-weight:normal;">3/22</div>
<div class="a" style="left:0;top:564.19px;width:1593px;height:1px;background:#f5f5f5"></div>
<div class="a" style="left:0;top:538.92px;width:48px;height:25.77px;overflow:hidden"><div class="t" style="left:-5.20px;top:0.67px;font-size:12.5px;color:#a3a3a3;font-weight:normal;">1.1.1.1.12</div></div>
<div class="t" style="left:52.50px;top:543.61px;font-size:11px;color:#a0a0a0;font-weight:bold;">AA-45</div>
<div class="a" style="left:237.00px;top:547.72px;width:11px;height:11px"><svg width="11" height="11" viewBox="0 0 11 11"><rect x="0" y="0" width="11" height="11" rx="2" fill="#4a9df8"/><path d="M2.8 2.9H8.2V4.6H6.3V8.6H4.7V4.6H2.8Z" fill="#fff"/></svg></div>
<div class="t" style="left:256.40px;top:544.51px;font-size:11px;color:#4a4a4a;font-weight:normal;">キックオフ開催準備</div>
<div class="a" style="left:469px;top:540.42px;width:22px;height:22px;border-radius:50%;background:#e3895a;"></div>
<div class="t" style="left:474.50px;top:541.86px;font-size:12px;color:#ffffff;font-weight:bold;">衣</div>
<div class="t" style="left:500.00px;top:540.56px;font-size:12px;color:#555555;font-weight:normal;letter-spacing:-0.8px;">小森 結衣</div>
<div class="a" style="left:557px;top:543.32px;width:33px;height:16px;border-radius:5px;background:#e6f6ed"></div>
<div class="t" style="left:563.00px;top:542.26px;font-size:12px;color:#3fb877;font-weight:normal;letter-spacing:-0.4px">完了</div>
<div class="a" style="left:643px;top:546.92px;width:91px;height:9px;border-radius:2px;background:#e6e6e6"></div>
<div class="a" style="left:643px;top:546.92px;width:91.00px;height:9px;border-radius:2px;background:#78c694;box-shadow:inset 0 0 0 1px #66bc83"></div>
<div class="t" style="right:775.00px;top:540.36px;font-size:12px;color:#555555;font-weight:normal;">4日</div>
<div class="t" style="left:834.00px;top:540.36px;font-size:12px;color:#555555;font-weight:normal;">3/22</div>
<div class="t" style="left:926.00px;top:540.36px;font-size:12px;color:#555555;font-weight:normal;">3/25</div>
<svg class="a" style="left:1022.5px;top:545.72px" width="8" height="15" viewBox="0 0 8 15"><path d="M4 0L7.6 4.6H4.9L4.3 15H3.7L3.1 4.6H0.4Z" fill="#f5a623"/></svg>
<div class="t" style="left:1036.50px;top:544.61px;font-size:11px;color:#333333;font-weight:normal;">中</div>
<div class="a" style="left:0;top:589.96px;width:1593px;height:1px;background:#f5f5f5"></div>
<div class="a" style="left:0;top:564.69px;width:48px;height:25.77px;overflow:hidden"><div class="t" style="left:-5.20px;top:0.67px;font-size:12.5px;color:#a3a3a3;font-weight:normal;">1.1.1.1.13</div></div>
<div class="t" style="left:52.50px;top:569.38px;font-size:11px;color:#a0a0a0;font-weight:bold;">AA-46</div>
<div class="a" style="left:237.00px;top:573.49px;width:11px;height:11px"><svg width="11" height="11" viewBox="0 0 11 11"><rect x="0" y="0" width="11" height="11" rx="2" fill="#4a9df8"/><path d="M2.8 2.9H8.2V4.6H6.3V8.6H4.7V4.6H2.8Z" fill="#fff"/></svg></div>
<div class="t" style="left:256.40px;top:570.28px;font-size:11px;color:#4a4a4a;font-weight:normal;">キックオフ資料確定</div>
<div class="a" style="left:469px;top:566.19px;width:22px;height:22px;border-radius:50%;background:#2fb0d4;"></div>
<div class="t" style="left:474.50px;top:567.63px;font-size:12px;color:#ffffff;font-weight:bold;">紀</div>
<div class="t" style="left:500.00px;top:566.33px;font-size:12px;color:#555555;font-weight:normal;letter-spacing:-0.8px;">佐藤 美紀</div>
<div class="a" style="left:557px;top:569.09px;width:33px;height:16px;border-radius:5px;background:#e6f6ed"></div>
<div class="t" style="left:563.00px;top:568.03px;font-size:12px;color:#3fb877;font-weight:normal;letter-spacing:-0.4px">完了</div>
<div class="a" style="left:643px;top:572.69px;width:91px;height:9px;border-radius:2px;background:#e6e6e6"></div>
<div class="a" style="left:643px;top:572.69px;width:91.00px;height:9px;border-radius:2px;background:#78c694;box-shadow:inset 0 0 0 1px #66bc83"></div>
<div class="t" style="right:775.00px;top:566.13px;font-size:12px;color:#555555;font-weight:normal;">7日</div>
<div class="t" style="left:834.00px;top:566.13px;font-size:12px;color:#555555;font-weight:normal;">3/22</div>
<div class="t" style="left:926.00px;top:566.13px;font-size:12px;color:#555555;font-weight:normal;">3/30</div>
<div class="a" style="left:0;top:615.73px;width:1593px;height:1px;background:#f5f5f5"></div>
<div class="a" style="left:0;top:590.46px;width:48px;height:25.77px;overflow:hidden"><div class="t" style="left:-5.20px;top:0.67px;font-size:12.5px;color:#a3a3a3;font-weight:normal;">1.1.1.1.14</div></div>
<div class="t" style="left:52.50px;top:595.15px;font-size:11px;color:#a0a0a0;font-weight:bold;">AA-47</div>
<div class="a" style="left:237.00px;top:599.26px;width:11px;height:11px"><svg width="11" height="11" viewBox="0 0 11 11"><rect x="0" y="0" width="11" height="11" rx="2" fill="#f5a83a"/><path d="M5.5 2.3L8.7 5.5L5.5 8.7L2.3 5.5Z" fill="#fff"/></svg></div>
<div class="t" style="left:256.40px;top:596.05px;font-size:11px;color:#4a4a4a;font-weight:normal;">キックオフ実施</div>
<div class="a" style="left:469px;top:591.96px;width:22px;height:22px;border-radius:50%;background:#3f8ee0;"></div>
<div class="t" style="left:474.50px;top:593.40px;font-size:12px;color:#ffffff;font-weight:bold;">也</div>
<div class="t" style="left:500.00px;top:592.10px;font-size:12px;color:#555555;font-weight:normal;letter-spacing:-0.8px;">小野 拓也</div>
<div class="a" style="left:557px;top:594.86px;width:44px;height:16px;border-radius:5px;background:#e6f1fe"></div>
<div class="t" style="left:563.00px;top:593.80px;font-size:12px;color:#3d8ef0;font-weight:normal;letter-spacing:-0.7px">実行中</div>
<div class="a" style="left:663.3px;top:600.46px;width:7px;height:7px;background:#d6d6d6;transform:rotate(45deg)"></div>
<div class="t" style="right:775.00px;top:591.90px;font-size:12px;color:#555555;font-weight:normal;">0</div>
<div class="t" style="left:834.00px;top:591.90px;font-size:12px;color:#555555;font-weight:normal;">-</div>
<div class="t" style="left:926.00px;top:591.90px;font-size:12px;color:#f46262;font-weight:normal;">4/2</div>
<div class="a" style="left:0;top:641.50px;width:1593px;height:1px;background:#f5f5f5"></div>
<div class="a" style="left:0;top:616.23px;width:48px;height:25.77px;overflow:hidden"><div class="t" style="left:-5.20px;top:0.67px;font-size:12.5px;color:#a3a3a3;font-weight:normal;">1.1.1.2</div></div>
<div class="t" style="left:52.50px;top:620.92px;font-size:11px;color:#a0a0a0;font-weight:bold;">AA-102</div>
<div class="a" style="left:220.40px;top:625.03px;width:11px;height:11px"><svg width="11" height="11" viewBox="0 0 11 11"><rect x="0" y="0" width="11" height="11" rx="2" fill="#4a9df8"/><path d="M2.8 2.9H8.2V4.6H6.3V8.6H4.7V4.6H2.8Z" fill="#fff"/></svg></div>
<div class="t" style="left:239.80px;top:621.82px;font-size:11px;color:#4a4a4a;font-weight:normal;">WAP各種サービスのご案内</div>
<div class="a" style="left:443.2px;top:623.83px;width:14px;height:13px"><svg width="14" height="13" viewBox="0 0 14 13"><path d="M3.2 9.6C2 8.7 1.2 7.4 1.2 6C1.2 3.3 3.8 1.2 7 1.2C10.2 1.2 12.8 3.3 12.8 6C12.8 8.7 10.2 10.6 7 10.6C6.3 10.6 5.6 10.5 5 10.3L2.6 12Z" fill="none" stroke="#b9b9b9" stroke-width="1.05" stroke-linejoin="round"/></svg></div>
<div class="a" style="left:469px;top:617.73px;width:22px;height:22px;border-radius:50%;background:#3f8ee0;"></div>
<div class="t" style="left:474.50px;top:619.17px;font-size:12px;color:#ffffff;font-weight:bold;">也</div>
<div class="t" style="left:500.00px;top:617.87px;font-size:12px;color:#555555;font-weight:normal;letter-spacing:-0.8px;">小野 拓也</div>
<div class="a" style="left:557px;top:620.63px;width:44px;height:16px;border-radius:5px;background:#e6f1fe"></div>
<div class="t" style="left:563.00px;top:619.57px;font-size:12px;color:#3d8ef0;font-weight:normal;letter-spacing:-0.7px">実行中</div>
<div class="a" style="left:643px;top:624.23px;width:91px;height:9px;border-radius:2px;background:#e6e6e6"></div>
<div class="a" style="left:643px;top:624.23px;width:45.50px;height:9px;border-radius:2px;background:#78c694;box-shadow:inset 0 0 0 1px #66bc83"></div>
<div class="t" style="right:775.00px;top:617.67px;font-size:12px;color:#555555;font-weight:normal;">1日</div>
<div class="t" style="left:834.00px;top:617.67px;font-size:12px;color:#555555;font-weight:normal;">3/11</div>
<div class="t" style="left:926.00px;top:617.67px;font-size:12px;color:#f46262;font-weight:normal;">3/11</div>
<div class="a" style="left:0;top:667.27px;width:1593px;height:1px;background:#f5f5f5"></div>
<div class="a" style="left:0;top:642.00px;width:48px;height:25.77px;overflow:hidden"><div class="t" style="left:-5.20px;top:0.67px;font-size:12.5px;color:#a3a3a3;font-weight:normal;">1.1.1.3</div></div>
<div class="t" style="left:52.50px;top:646.69px;font-size:11px;color:#a0a0a0;font-weight:bold;">AA-145</div>
<div class="a" style="left:220.40px;top:650.80px;width:11px;height:11px"><svg width="11" height="11" viewBox="0 0 11 11"><rect x="0" y="0" width="11" height="11" rx="2" fill="#4a9df8"/><path d="M2.8 2.9H8.2V4.6H6.3V8.6H4.7V4.6H2.8Z" fill="#fff"/></svg></div>
<div class="t" style="left:239.80px;top:647.59px;font-size:11px;color:#4a4a4a;font-weight:normal;">洗出しシート送付</div>
<div class="a" style="left:469px;top:643.50px;width:22px;height:22px;border-radius:50%;background:#e3895a;"></div>
<div class="t" style="left:474.50px;top:644.94px;font-size:12px;color:#ffffff;font-weight:bold;">衣</div>
<div class="t" style="left:500.00px;top:643.64px;font-size:12px;color:#555555;font-weight:normal;letter-spacing:-0.8px;">小森 結衣</div>
<div class="a" style="left:557px;top:646.40px;width:33px;height:16px;border-radius:5px;background:#e6f6ed"></div>
<div class="t" style="left:563.00px;top:645.34px;font-size:12px;color:#3fb877;font-weight:normal;letter-spacing:-0.4px">完了</div>
<div class="a" style="left:643px;top:650.00px;width:91px;height:9px;border-radius:2px;background:#e6e6e6"></div>
<div class="a" style="left:643px;top:650.00px;width:91.00px;height:9px;border-radius:2px;background:#78c694;box-shadow:inset 0 0 0 1px #66bc83"></div>
<div class="t" style="right:775.00px;top:643.44px;font-size:12px;color:#555555;font-weight:normal;">1日</div>
<div class="t" style="left:834.00px;top:643.44px;font-size:12px;color:#555555;font-weight:normal;">3/30</div>
<div class="t" style="left:926.00px;top:643.44px;font-size:12px;color:#555555;font-weight:normal;">3/30</div>
<div class="a" style="left:0;top:693.04px;width:1593px;height:1px;background:#f5f5f5"></div>
<div class="a" style="left:0;top:667.77px;width:48px;height:25.77px;overflow:hidden"><div class="t" style="left:-5.20px;top:0.67px;font-size:12.5px;color:#a3a3a3;font-weight:normal;">1.1.2</div></div>
<div class="t" style="left:52.50px;top:672.46px;font-size:11px;color:#a0a0a0;font-weight:bold;">AA-107</div>
<div class="a" style="left:176.60px;top:676.17px;width:12px;height:8px"><svg width="12" height="8" viewBox="0 0 12 8"><path d="M0.8 1.3L6 6.4L11.2 1.3" fill="none" stroke="#9c9c9c" stroke-width="1.8"/></svg></div>
<div class="a" style="left:203.80px;top:676.57px;width:11px;height:11px"><svg width="11" height="11" viewBox="0 0 11 11"><rect x="0" y="0" width="11" height="11" rx="2" fill="#5b4fc9"/><path d="M2.5 3H4.8L5.6 3.8H8.5V8H2.5Z" fill="#fff"/></svg></div>
<div class="t" style="left:223.20px;top:673.36px;font-size:11px;color:#4a4a4a;font-weight:normal;">サーベイ実施</div>
<div class="a" style="left:469px;top:669.27px;width:22px;height:22px;border-radius:50%;background:#3f8ee0;"></div>
<div class="t" style="left:474.50px;top:670.71px;font-size:12px;color:#ffffff;font-weight:bold;">也</div>
<div class="t" style="left:500.00px;top:669.41px;font-size:12px;color:#555555;font-weight:normal;letter-spacing:-0.8px;">小野 拓也</div>
<div class="a" style="left:557px;top:672.17px;width:33px;height:16px;border-radius:5px;background:#e6f6ed"></div>
<div class="t" style="left:563.00px;top:671.11px;font-size:12px;color:#3fb877;font-weight:normal;letter-spacing:-0.4px">完了</div>
<div class="a" style="left:643px;top:675.77px;width:91px;height:9px;border-radius:2px;background:#e6e6e6"></div>
<div class="a" style="left:643px;top:675.77px;width:91.00px;height:9px;border-radius:2px;background:#3f7652;border:1px solid #22603a"></div>
<div class="t" style="right:775.00px;top:669.21px;font-size:12px;color:#555555;font-weight:normal;">7日</div>
<div class="t" style="left:834.00px;top:669.21px;font-size:12px;color:#555555;font-weight:normal;">3/31</div>
<div class="t" style="left:926.00px;top:669.21px;font-size:12px;color:#555555;font-weight:normal;">4/8</div>
<div class="a" style="left:0;top:718.81px;width:1593px;height:1px;background:#f5f5f5"></div>
<div class="a" style="left:0;top:693.54px;width:48px;height:25.77px;overflow:hidden"><div class="t" style="left:-5.20px;top:0.67px;font-size:12.5px;color:#a3a3a3;font-weight:normal;">1.1.2.1</div></div>
<div class="t" style="left:52.50px;top:698.23px;font-size:11px;color:#a0a0a0;font-weight:bold;">AA-109</div>
<div class="a" style="left:220.40px;top:702.34px;width:11px;height:11px"><svg width="11" height="11" viewBox="0 0 11 11"><rect x="0" y="0" width="11" height="11" rx="2" fill="#4a9df8"/><path d="M2.8 2.9H8.2V4.6H6.3V8.6H4.7V4.6H2.8Z" fill="#fff"/></svg></div>
<div class="t" style="left:239.80px;top:699.13px;font-size:11px;color:#4a4a4a;font-weight:normal;">SPECサーベイシート記入・返送</div>
<div class="a" style="left:469px;top:695.04px;width:22px;height:22px;border-radius:50%;background:#3f8ee0;"></div>
<div class="t" style="left:474.50px;top:696.48px;font-size:12px;color:#ffffff;font-weight:bold;">也</div>
<div class="t" style="left:500.00px;top:695.18px;font-size:12px;color:#555555;font-weight:normal;letter-spacing:-0.8px;">小野 拓也</div>
<div class="a" style="left:557px;top:697.94px;width:33px;height:16px;border-radius:5px;background:#e6f6ed"></div>
<div class="t" style="left:563.00px;top:696.88px;font-size:12px;color:#3fb877;font-weight:normal;letter-spacing:-0.4px">完了</div>
<div class="a" style="left:643px;top:701.54px;width:91px;height:9px;border-radius:2px;background:#e6e6e6"></div>
<div class="a" style="left:643px;top:701.54px;width:91.00px;height:9px;border-radius:2px;background:#78c694;box-shadow:inset 0 0 0 1px #66bc83"></div>
<div class="t" style="right:775.00px;top:694.98px;font-size:12px;color:#555555;font-weight:normal;">7日</div>
<div class="t" style="left:834.00px;top:694.98px;font-size:12px;color:#555555;font-weight:normal;">3/31</div>
<div class="t" style="left:926.00px;top:694.98px;font-size:12px;color:#555555;font-weight:normal;">4/8</div>
<div class="a" style="left:0;top:744.58px;width:1593px;height:1px;background:#f5f5f5"></div>
<div class="a" style="left:0;top:719.31px;width:48px;height:25.77px;overflow:hidden"><div class="t" style="left:-5.20px;top:0.67px;font-size:12.5px;color:#a3a3a3;font-weight:normal;">1.1.3</div></div>
<div class="t" style="left:52.50px;top:724.00px;font-size:11px;color:#a0a0a0;font-weight:bold;">AA-108</div>
<div class="a" style="left:203.80px;top:728.11px;width:11px;height:11px"><svg width="11" height="11" viewBox="0 0 11 11"><rect x="0" y="0" width="11" height="11" rx="2" fill="#4a9df8"/><path d="M2.8 2.9H8.2V4.6H6.3V8.6H4.7V4.6H2.8Z" fill="#fff"/></svg></div>
<div class="t" style="left:223.20px;top:724.90px;font-size:11px;color:#4a4a4a;font-weight:normal;">SPECサーベイシート送付</div>
<div class="a" style="left:469px;top:720.81px;width:22px;height:22px;border-radius:50%;background:#3f8ee0;"></div>
<div class="t" style="left:474.50px;top:722.25px;font-size:12px;color:#ffffff;font-weight:bold;">也</div>
<div class="t" style="left:500.00px;top:720.95px;font-size:12px;color:#555555;font-weight:normal;letter-spacing:-0.8px;">小野 拓也</div>
<div class="a" style="left:557px;top:723.71px;width:33px;height:16px;border-radius:5px;background:#e6f6ed"></div>
<div class="t" style="left:563.00px;top:722.65px;font-size:12px;color:#3fb877;font-weight:normal;letter-spacing:-0.4px">完了</div>
<div class="a" style="left:643px;top:727.31px;width:91px;height:9px;border-radius:2px;background:#e6e6e6"></div>
<div class="a" style="left:643px;top:727.31px;width:91.00px;height:9px;border-radius:2px;background:#78c694;box-shadow:inset 0 0 0 1px #66bc83"></div>
<div class="t" style="right:775.00px;top:720.75px;font-size:12px;color:#555555;font-weight:normal;">3日</div>
<div class="t" style="left:834.00px;top:720.75px;font-size:12px;color:#555555;font-weight:normal;">3/17</div>
<div class="t" style="left:926.00px;top:720.75px;font-size:12px;color:#555555;font-weight:normal;">3/19</div>
<div class="a" style="left:0;top:770.35px;width:1593px;height:1px;background:#f5f5f5"></div>
<div class="a" style="left:0;top:745.08px;width:48px;height:25.77px;overflow:hidden"><div class="t" style="left:-5.20px;top:0.67px;font-size:12.5px;color:#a3a3a3;font-weight:normal;">1.1.4</div></div>
<div class="t" style="left:52.50px;top:749.77px;font-size:11px;color:#a0a0a0;font-weight:bold;">AA-110</div>
<div class="a" style="left:176.60px;top:753.48px;width:12px;height:8px"><svg width="12" height="8" viewBox="0 0 12 8"><path d="M0.8 1.3L6 6.4L11.2 1.3" fill="none" stroke="#9c9c9c" stroke-width="1.8"/></svg></div>
<div class="a" style="left:203.80px;top:753.88px;width:11px;height:11px"><svg width="11" height="11" viewBox="0 0 11 11"><rect x="0" y="0" width="11" height="11" rx="2" fill="#5b4fc9"/><path d="M2.5 3H4.8L5.6 3.8H8.5V8H2.5Z" fill="#fff"/></svg></div>
<div class="t" style="left:223.20px;top:750.67px;font-size:11px;color:#4a4a4a;font-weight:normal;">各種現行情報準備</div>
<div class="a" style="left:469px;top:746.58px;width:22px;height:22px;border-radius:50%;background:#2fb0d4;"></div>
<div class="t" style="left:474.50px;top:748.02px;font-size:12px;color:#ffffff;font-weight:bold;">紀</div>
<div class="t" style="left:500.00px;top:746.72px;font-size:12px;color:#555555;font-weight:normal;letter-spacing:-0.8px;">佐藤 美紀</div>
<div class="a" style="left:557px;top:749.48px;width:44px;height:16px;border-radius:5px;background:#e6f1fe"></div>
<div class="t" style="left:563.00px;top:748.42px;font-size:12px;color:#3d8ef0;font-weight:normal;letter-spacing:-0.7px">実行中</div>
<div class="a" style="left:643px;top:753.08px;width:91px;height:9px;border-radius:2px;background:#e6e6e6"></div>
<div class="a" style="left:643px;top:753.08px;width:78.26px;height:9px;border-radius:2px;background:#3f7652;border:1px solid #22603a"></div>
<div class="t" style="right:775.00px;top:746.52px;font-size:12px;color:#555555;font-weight:normal;">17日</div>
<div class="t" style="left:834.00px;top:746.52px;font-size:12px;color:#555555;font-weight:normal;">3/17</div>
<div class="t" style="left:926.00px;top:746.52px;font-size:12px;color:#f46262;font-weight:normal;">4/8</div>
<div class="a" style="left:0;top:796.12px;width:1593px;height:1px;background:#f5f5f5"></div>
<div class="a" style="left:0;top:770.85px;width:48px;height:25.77px;overflow:hidden"><div class="t" style="left:-5.20px;top:0.67px;font-size:12.5px;color:#a3a3a3;font-weight:normal;">1.1.4.1</div></div>
<div class="t" style="left:52.50px;top:775.54px;font-size:11px;color:#a0a0a0;font-weight:bold;">AA-141</div>
<div class="a" style="left:220.40px;top:779.65px;width:11px;height:11px"><svg width="11" height="11" viewBox="0 0 11 11"><rect x="0" y="0" width="11" height="11" rx="2" fill="#4a9df8"/><path d="M2.8 2.9H8.2V4.6H6.3V8.6H4.7V4.6H2.8Z" fill="#fff"/></svg></div>
<div class="t" style="left:239.80px;top:776.44px;font-size:11px;color:#4a4a4a;font-weight:normal;">項目情報準備シート送付</div>
<div class="a" style="left:469px;top:772.35px;width:22px;height:22px;border-radius:50%;background:#e3895a;"></div>
<div class="t" style="left:474.50px;top:773.79px;font-size:12px;color:#ffffff;font-weight:bold;">衣</div>
<div class="t" style="left:500.00px;top:772.49px;font-size:12px;color:#555555;font-weight:normal;letter-spacing:-0.8px;">小森 結衣</div>
<div class="a" style="left:557px;top:775.25px;width:45px;height:17px;border-radius:6px;border:1px solid #b0b0b0;background:#fff"></div>
<div class="t" style="left:563.00px;top:774.19px;font-size:12px;color:#9a9a9a;font-weight:normal;letter-spacing:-0.6px">未開始</div>
<div class="a" style="left:643px;top:778.85px;width:91px;height:9px;border-radius:2px;background:#e6e6e6"></div>
<div class="a" style="left:0;top:821.89px;width:1593px;height:1px;background:#f5f5f5"></div>
<div class="a" style="left:0;top:796.62px;width:48px;height:25.77px;overflow:hidden"><div class="t" style="left:-5.20px;top:0.67px;font-size:12.5px;color:#a3a3a3;font-weight:normal;">1.1.4.2</div></div>
<div class="t" style="left:52.50px;top:801.31px;font-size:11px;color:#a0a0a0;font-weight:bold;">AA-142</div>
<div class="a" style="left:220.40px;top:805.42px;width:11px;height:11px"><svg width="11" height="11" viewBox="0 0 11 11"><rect x="0" y="0" width="11" height="11" rx="2" fill="#4a9df8"/><path d="M2.8 2.9H8.2V4.6H6.3V8.6H4.7V4.6H2.8Z" fill="#fff"/></svg></div>
<div class="t" style="left:239.80px;top:802.21px;font-size:11px;color:#4a4a4a;font-weight:normal;">項目情報準備シート記入・返送</div>
<div class="a" style="left:469px;top:798.12px;width:22px;height:22px;border-radius:50%;background:#e3895a;"></div>
<div class="t" style="left:474.50px;top:799.56px;font-size:12px;color:#ffffff;font-weight:bold;">衣</div>
<div class="t" style="left:500.00px;top:798.26px;font-size:12px;color:#555555;font-weight:normal;letter-spacing:-0.8px;">小森 結衣</div>
<div class="a" style="left:557px;top:801.02px;width:33px;height:16px;border-radius:5px;background:#e6f6ed"></div>
<div class="t" style="left:563.00px;top:799.96px;font-size:12px;color:#3fb877;font-weight:normal;letter-spacing:-0.4px">完了</div>
<div class="a" style="left:643px;top:804.62px;width:91px;height:9px;border-radius:2px;background:#e6e6e6"></div>
<div class="a" style="left:643px;top:804.62px;width:91.00px;height:9px;border-radius:2px;background:#78c694;box-shadow:inset 0 0 0 1px #66bc83"></div>
<div class="t" style="right:775.00px;top:798.06px;font-size:12px;color:#555555;font-weight:normal;">7日</div>
<div class="t" style="left:834.00px;top:798.06px;font-size:12px;color:#555555;font-weight:normal;">3/31</div>
<div class="t" style="left:926.00px;top:798.06px;font-size:12px;color:#555555;font-weight:normal;">4/8</div>
<div class="a" style="left:0;top:847.66px;width:1593px;height:1px;background:#f5f5f5"></div>
<div class="a" style="left:0;top:822.39px;width:48px;height:25.77px;overflow:hidden"><div class="t" style="left:-5.20px;top:0.67px;font-size:12.5px;color:#a3a3a3;font-weight:normal;">1.1.4.3</div></div>
<div class="t" style="left:52.50px;top:827.08px;font-size:11px;color:#a0a0a0;font-weight:bold;">AA-146</div>
<div class="a" style="left:220.40px;top:831.19px;width:11px;height:11px"><svg width="11" height="11" viewBox="0 0 11 11"><rect x="0" y="0" width="11" height="11" rx="2" fill="#4a9df8"/><path d="M2.8 2.9H8.2V4.6H6.3V8.6H4.7V4.6H2.8Z" fill="#fff"/></svg></div>
<div class="t" style="left:239.80px;top:827.98px;font-size:11px;color:#4a4a4a;font-weight:normal;">洗出しシート記入・返送</div>
<div class="a" style="left:469px;top:823.89px;width:22px;height:22px;border-radius:50%;background:#e3895a;"></div>
<div class="t" style="left:474.50px;top:825.33px;font-size:12px;color:#ffffff;font-weight:bold;">衣</div>
<div class="t" style="left:500.00px;top:824.03px;font-size:12px;color:#555555;font-weight:normal;letter-spacing:-0.8px;">小森 結衣</div>
<div class="a" style="left:557px;top:826.79px;width:33px;height:16px;border-radius:5px;background:#e6f6ed"></div>
<div class="t" style="left:563.00px;top:825.73px;font-size:12px;color:#3fb877;font-weight:normal;letter-spacing:-0.4px">完了</div>
<div class="a" style="left:643px;top:830.39px;width:91px;height:9px;border-radius:2px;background:#e6e6e6"></div>
<div class="a" style="left:643px;top:830.39px;width:91.00px;height:9px;border-radius:2px;background:#78c694;box-shadow:inset 0 0 0 1px #66bc83"></div>
<div class="t" style="right:775.00px;top:823.83px;font-size:12px;color:#555555;font-weight:normal;">7日</div>
<div class="t" style="left:834.00px;top:823.83px;font-size:12px;color:#555555;font-weight:normal;">3/31</div>
<div class="t" style="left:926.00px;top:823.83px;font-size:12px;color:#555555;font-weight:normal;">4/8</div>
<div class="a" style="left:0;top:873.43px;width:1593px;height:1px;background:#f5f5f5"></div>
<div class="a" style="left:0;top:848.16px;width:48px;height:25.77px;overflow:hidden"><div class="t" style="left:-5.20px;top:0.67px;font-size:12.5px;color:#a3a3a3;font-weight:normal;">1.1.4.4</div></div>
<div class="t" style="left:52.50px;top:852.85px;font-size:11px;color:#a0a0a0;font-weight:bold;">AA-25</div>
<div class="a" style="left:220.40px;top:856.96px;width:11px;height:11px"><svg width="11" height="11" viewBox="0 0 11 11"><rect x="0" y="0" width="11" height="11" rx="2" fill="#4a9df8"/><path d="M2.8 2.9H8.2V4.6H6.3V8.6H4.7V4.6H2.8Z" fill="#fff"/></svg></div>
<div class="t" style="left:239.80px;top:853.75px;font-size:11px;color:#4a4a4a;font-weight:normal;">基本計画フェーズプロジェクト場所整理</div>
<div class="a" style="left:469px;top:849.66px;width:22px;height:22px;border-radius:50%;background:#e3895a;"></div>
<div class="t" style="left:474.50px;top:851.10px;font-size:12px;color:#ffffff;font-weight:bold;">衣</div>
<div class="t" style="left:500.00px;top:849.80px;font-size:12px;color:#555555;font-weight:normal;letter-spacing:-0.8px;">小森 結衣</div>
<div class="a" style="left:557px;top:852.56px;width:33px;height:16px;border-radius:5px;background:#e6f6ed"></div>
<div class="t" style="left:563.00px;top:851.50px;font-size:12px;color:#3fb877;font-weight:normal;letter-spacing:-0.4px">完了</div>
<div class="a" style="left:643px;top:856.16px;width:91px;height:9px;border-radius:2px;background:#e6e6e6"></div>
<div class="a" style="left:643px;top:856.16px;width:91.00px;height:9px;border-radius:2px;background:#78c694;box-shadow:inset 0 0 0 1px #66bc83"></div>
<div class="t" style="right:775.00px;top:849.60px;font-size:12px;color:#555555;font-weight:normal;">3日</div>
<div class="t" style="left:834.00px;top:849.60px;font-size:12px;color:#555555;font-weight:normal;">3/17</div>
<div class="t" style="left:926.00px;top:849.60px;font-size:12px;color:#555555;font-weight:normal;">3/19</div>
<div class="a" style="left:0;top:899.20px;width:1593px;height:1px;background:#f5f5f5"></div>
<div class="a" style="left:0;top:873.93px;width:48px;height:25.77px;overflow:hidden"><div class="t" style="left:-5.20px;top:0.67px;font-size:12.5px;color:#a3a3a3;font-weight:normal;">1.1.4.5</div></div>
<div class="t" style="left:52.50px;top:878.62px;font-size:11px;color:#a0a0a0;font-weight:bold;">AA-143</div>
<div class="a" style="left:220.40px;top:882.73px;width:11px;height:11px"><svg width="11" height="11" viewBox="0 0 11 11"><rect x="0" y="0" width="11" height="11" rx="2" fill="#4a9df8"/><path d="M2.8 2.9H8.2V4.6H6.3V8.6H4.7V4.6H2.8Z" fill="#fff"/></svg></div>
<div class="t" style="left:239.80px;top:879.52px;font-size:11px;color:#4a4a4a;font-weight:normal;">洗出しシート送付</div>
<div class="a" style="left:469px;top:875.43px;width:22px;height:22px;border-radius:50%;background:#e3895a;"></div>
<div class="t" style="left:474.50px;top:876.87px;font-size:12px;color:#ffffff;font-weight:bold;">衣</div>
<div class="t" style="left:500.00px;top:875.57px;font-size:12px;color:#555555;font-weight:normal;letter-spacing:-0.8px;">小森 結衣</div>
<div class="a" style="left:557px;top:878.33px;width:33px;height:16px;border-radius:5px;background:#e6f6ed"></div>
<div class="t" style="left:563.00px;top:877.27px;font-size:12px;color:#3fb877;font-weight:normal;letter-spacing:-0.4px">完了</div>
<div class="a" style="left:643px;top:881.93px;width:91px;height:9px;border-radius:2px;background:#e6e6e6"></div>
<div class="a" style="left:643px;top:881.93px;width:91.00px;height:9px;border-radius:2px;background:#78c694;box-shadow:inset 0 0 0 1px #66bc83"></div>
<div class="t" style="right:775.00px;top:875.37px;font-size:12px;color:#555555;font-weight:normal;">1日</div>
<div class="t" style="left:834.00px;top:875.37px;font-size:12px;color:#555555;font-weight:normal;">3/30</div>
<div class="t" style="left:926.00px;top:875.37px;font-size:12px;color:#555555;font-weight:normal;">3/30</div>
</body></html>
